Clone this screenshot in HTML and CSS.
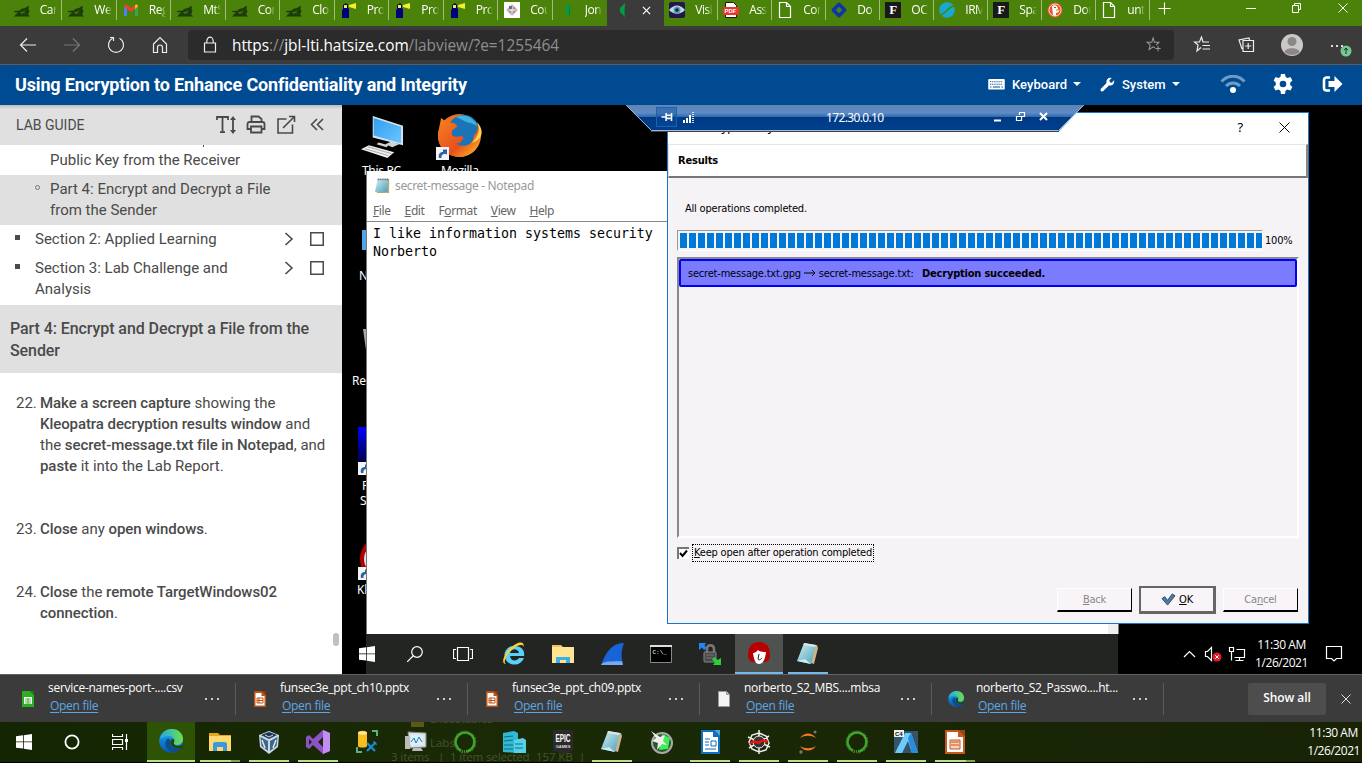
FILE: index.html
```html
<!DOCTYPE html>
<html lang="en">
<head>
<meta charset="utf-8">
<title>Lab view</title>
<link rel="stylesheet" href="styles.css">
</head>
<body>
<svg class="defs" aria-hidden="true">
  <defs>
    <linearGradient id="edgeBlue" x1="0" y1="0" x2="0" y2="1"><stop offset="0" stop-color="#35c1f1"/><stop offset=".5" stop-color="#0f7fd4"/><stop offset="1" stop-color="#0c59a4"/></linearGradient>
    <linearGradient id="edgeTop" x1="0" y1="0" x2="1" y2="0"><stop offset="0" stop-color="#24a8e8"/><stop offset="1" stop-color="#6be04e"/></linearGradient>
    <linearGradient id="screen" x1="0" y1="0" x2="1" y2="1"><stop offset="0" stop-color="#2f9df0"/><stop offset="1" stop-color="#6cc6ff"/></linearGradient>
    <linearGradient id="fox" x1="0" y1="0" x2="1" y2="1"><stop offset="0" stop-color="#f58220"/><stop offset=".6" stop-color="#e8501c"/><stop offset="1" stop-color="#ffc928"/></linearGradient>
    <linearGradient id="noteFill" x1="0" y1="0" x2="1" y2="1"><stop offset="0" stop-color="#d5f0f6"/><stop offset="1" stop-color="#4d9fb6"/></linearGradient>
    <linearGradient id="puttyBlue" x1="0" y1="0" x2="0" y2="1"><stop offset="0" stop-color="#0000ff"/><stop offset="1" stop-color="#000048"/></linearGradient>
    <linearGradient id="rdpFill" x1="0" y1="0" x2="0" y2="1"><stop offset="0" stop-color="#5f83b4"/><stop offset=".3" stop-color="#5d8cc5"/><stop offset=".46" stop-color="#2f68ae"/><stop offset=".47" stop-color="#003a84"/><stop offset="1" stop-color="#003f8e"/></linearGradient>
  </defs>
  <symbol id="wolf" viewBox="0 0 16 16"><path d="M0 9l6-.5 1-1.500 4-1 3-2 1 .5-.5 2.500 1 2-1.500 4h1l.5 1H1v-1l3-2.500-4-.5zM6 10.500l2 1.500 3-3z" fill="#1c3d0a" fill-rule="evenodd"/><path d="M0 14.500h16M11 8l-1 4" stroke="#335c0b" fill="none"/></symbol>
  <symbol id="gmail" viewBox="0 0 16 16"><path d="M1 14V3.500l3 2V14z" fill="#4285f4"/><path d="M15 14V3.500l-3 2V14z" fill="#34a853"/><path d="M1 4.500C1 2.500 2.500 2 4 3l4 3 4-3v4L8 10 1 5z" fill="#ea4335"/><path d="M12 3c2-1.300 3 0 3 1.500L12 7z" fill="#fbbc04"/></symbol>
  <symbol id="house" viewBox="0 0 16 16"><path d="M2 3l3-2 2 2v3l1 1v9H1V8l1-1V4H2z" fill="#00007c"/><path d="M3 3h3v3H3zM8 3l7-2v6l-7-2z" fill="#f4ee2c"/></symbol>
  <symbol id="course" viewBox="0 0 16 16"><rect width="16" height="16" fill="#fff"/><path d="M8 2l6 6-6 6-6-6z" fill="#c2c4d0"/><circle cx="8" cy="8" r="3.500" fill="#b88d92"/><path d="M5 8h6M8 5v6" stroke="#fff"/><path d="M5 4h3v3H5z" fill="#5b7580"/></symbol>
  <symbol id="bluePip" viewBox="0 0 16 16"><path d="M11 1v14l-5-5V6z" fill="#009c46"/><path d="M11 1v14l-1-4z" fill="#007b34"/></symbol>
  <symbol id="eye" viewBox="0 0 16 16"><rect width="16" height="16" rx="2" fill="#26144b"/><path d="M0 8c5-6 11-6 16 0-5 5-11 5-16 0z" fill="#b9ddea"/><circle cx="8" cy="8" r="3.500" fill="#5b9bb4"/><circle cx="8" cy="8" r="1.700" fill="#122"/></symbol>
  <symbol id="page" viewBox="0 0 16 16"><path d="M2.500.5h7l4 4v11h-11zM9.500.5v4h4" fill="none" stroke="#fff" stroke-width="1.200"/></symbol>
  <symbol id="diamond" viewBox="0 0 16 16"><path d="M8 2.300L13.700 8 8 13.700 2.300 8z" fill="none" stroke="#0b34ad" stroke-width="3.400" stroke-linejoin="round"/></symbol>
  <symbol id="leaf" viewBox="0 0 16 16"><circle cx="8" cy="8" r="7.800" fill="#18a9cf"/><path d="M2 13C7 11 9 5 15 4" stroke="#4b830c" stroke-width="1.500" fill="none"/></symbol>
  <symbol id="duck" viewBox="0 0 16 16"><circle cx="8" cy="8" r="7.500" fill="#e85430"/><circle cx="8" cy="8" r="6" fill="none" stroke="#fff" stroke-width=".8"/><path d="M5 4c4-2 6 1 6 3l1 3-3 1v3l-3-1z" fill="#fff"/><path d="M9 7l4 1-4 1.500z" fill="#f8c221"/><circle cx="8" cy="5.500" r=".8" fill="#234"/></symbol>
  <symbol id="shortcut" viewBox="0 0 13 13"><rect width="13" height="13" fill="#f4f4f4"/><path d="M3 11c-1-4 1-6 4-6V2.500h4v5L9 6.800C6 7 5 9 5.500 11z" fill="#2a62a5"/></symbol>
  <symbol id="win" viewBox="0 0 16 16"><path d="M0 2.200l7-.9v6.200H0zM7.800 1.200L16 0v7.500H7.800zM0 8.300h7v6.300l-7-.9zM7.800 8.300H16V16l-8.200-1.300z" fill="#fff"/></symbol>
  <symbol id="notepad" viewBox="0 0 24 24"><path d="M9 3h12l1 3-4 16-3-1z" fill="#cdb489"/><path d="M8 1l12 2-5 19L1 19z" fill="url(#noteFill)"/><path d="M8 1l12 2-1 2L7.500 3z" fill="#dce7e9"/><path d="M1 19l8-2 6 5z" fill="#c6edf4"/></symbol>
  <symbol id="folder" viewBox="0 0 24 24"><path d="M1 3h9l2 2h11v3H1z" fill="#e7a51c"/><path d="M1 6h22v15H1z" fill="#ffd970"/><path d="M5 21v-7c0-1 1-2 2-2h10c1 0 2 1 2 2v7h-4v-4H9v4z" fill="#3a99dd"/></symbol>
  <symbol id="edge" viewBox="0 0 24 24"><circle cx="12" cy="12" r="11.800" fill="url(#edgeBlue)"/><path d="M1 10C3 3 8 0 13 0c7 0 11 5 11 10 0 4-3 6-6 6-3 0-4-1-3-3 1-4-3-7-7-6-3 .5-5 1.500-7 3z" fill="url(#edgeTop)"/><path d="M8 10c-4 5 0 14 8 13 4-1 6-3 7-5-6 3-13 0-12-6 0-2-1-3-3-2z" fill="#0d4e91"/><path d="M15 10c1 3-1 4 0 5 1 2 5 3 8 1 .6-.6 1-1.500 1.500-2.500V20l-2-1c-3 1-9 0-11-4-1-2 0-5 3-5z" class="edge-gap"/></symbol>
  <symbol id="calc" viewBox="0 0 12 16"><path d="M0 0h8l4 4v12H0z" fill="#2cae22"/><path d="M2 6h8v7H2z" fill="#fff"/><path d="M3 8h6M3 10h6M3 12h6M6 7v6" stroke="#2cae22" stroke-width=".8"/><path d="M8 0h4v4z" fill="#1d7b17"/></symbol>
  <symbol id="impressSmall" viewBox="0 0 12 16"><path d="M0 0h8l4 4v12H0z" fill="#bd5217"/><path d="M1.500 2h6v3h3v9.500h-9z" fill="#fff"/><path d="M3 7h6v5H3zM3 9.500h6M5 7v5" stroke="#bd5217" fill="none"/><path d="M8.500 0H12v3.500z" fill="#8c3a0d"/></symbol>
  <symbol id="blank" viewBox="0 0 12 16"><path d="M.5.5h8l3 3v12H.5z" fill="#f4f4f4" stroke="#999"/><path d="M8.500.5v3h3" fill="#bbb" stroke="#999"/></symbol>
  <symbol id="conda" viewBox="0 0 24 24"><circle cx="12" cy="12" r="9.500" fill="none" stroke="#42a72d" stroke-width="2.600" stroke-dasharray="32 1 1 1 1 1" transform="rotate(-110 12 12)"/><circle cx="12" cy="12" r="10.800" fill="none" stroke="#347b26" stroke-width="1.500" stroke-dasharray="1 2 2 1.500 0 0" pathLength="80"/></symbol>
</svg>

<div class="desktop">
  <header class="tabs">
    <div class="tab"><svg><use href="#wolf"/></svg><span>Can</span></div>
    <div class="tab"><svg><use href="#wolf"/></svg><span>Wel</span></div>
    <div class="tab"><svg><use href="#gmail"/></svg><span>Reg</span></div>
    <div class="tab"><svg><use href="#wolf"/></svg><span>MtS</span></div>
    <div class="tab"><svg><use href="#wolf"/></svg><span>Con</span></div>
    <div class="tab"><svg><use href="#wolf"/></svg><span>Clo</span></div>
    <div class="tab"><svg><use href="#house"/></svg><span>Pro</span></div>
    <div class="tab"><svg><use href="#house"/></svg><span>Pro</span></div>
    <div class="tab"><svg><use href="#house"/></svg><span>Pro</span></div>
    <div class="tab"><svg><use href="#course"/></svg><span>Cou</span></div>
    <div class="tab last"><svg><use href="#bluePip"/></svg><span>Jon</span></div>
    <div class="tab active"><svg><use href="#bluePip"/></svg><svg class="tab-x" viewBox="0 0 10 10"><path d="M1 1l8 8M9 1L1 9" stroke="#fff" stroke-width="1.300"/></svg></div>
    <div class="tab r"><svg><use href="#eye"/></svg><span>Visi</span></div>
    <div class="tab r"><svg viewBox="0 0 16 16"><path d="M2.500.5h8l3 3v12h-11z" fill="#fff" stroke="#17200d"/><rect y="5" width="16" height="8" rx="1" fill="#ee342f"/><text x="1.500" y="11.300" class="pdf-word">PDF</text></svg><span>Ass</span></div>
    <div class="tab r"><svg><use href="#page"/></svg><span>Con</span></div>
    <div class="tab r"><svg><use href="#diamond"/></svg><span>Do</span></div>
    <div class="tab r"><b class="eff">F</b><span>OC</span></div>
    <div class="tab r"><svg><use href="#leaf"/></svg><span>IRM</span></div>
    <div class="tab r"><b class="eff">F</b><span>Spa</span></div>
    <div class="tab r"><svg><use href="#duck"/></svg><span>Dor</span></div>
    <div class="tab r"><svg><use href="#page"/></svg><span>unti</span></div>
    <svg class="new-tab" viewBox="0 0 14 14"><path d="M7 .5v13M.5 7h13" stroke="#fff" stroke-width="1.200"/></svg>
    <svg class="win-ctl" viewBox="0 0 106 12"><path d="M1 6.500h10M47.500 3.500h6v7h-6zM49.500 3.500v-2h6v6h-2M93.500 1.500l9 9M102.500 1.500l-9 9" fill="none" stroke="#fff"/></svg>
  </header>

  <div class="toolbar">
    <div class="nav-icons">
      <svg viewBox="0 0 18 18"><path d="M17 9H2M8 2.500L1.500 9 8 15.500" class="ln"/></svg>
      <svg viewBox="0 0 18 18" class="dim"><path d="M1 9h15M10 2.500L16.500 9 10 15.500" class="ln"/></svg>
      <svg viewBox="0 0 18 18"><path d="M12.500 2.200a7.500 7.500 0 1 1-7 0M3 1.500h3.500V5" class="ln"/></svg>
      <svg viewBox="0 0 18 18"><path d="M2.500 8L9 1.500 15.500 8v8.500h-4v-5a2.500 2.500 0 0 0-5 0v5h-4z" class="ln"/></svg>
    </div>
    <div class="address">
      <svg class="lock" viewBox="0 0 14 18"><path d="M1.500 7h11v9h-11zM3.800 7V5a3.200 3.800 0 0 1 6.400 0v2" class="ln"/></svg>
      <span class="url"><i>https</i>://<i>jbl-lti.hatsize.com</i>/labview/?e=1255464</span>
      <svg class="fav" viewBox="0 0 18 18"><path d="M10 12l-2-1-4.500 3 1.200-5.200L1.500 6h5L8 1l1.500 5h5l-3 3M13.500 10v6M10.500 13h6" class="ln"/></svg>
    </div>
    <div class="tools">
      <svg viewBox="0 0 18 18"><path d="M8 11.500L4 15l1-6-3.500-3h5L8.500 1l1.500 5h6M9.500 9.500H17M9.500 13H17" class="ln"/></svg>
      <svg viewBox="0 0 18 18"><path d="M6 4.500h10.500v11H6zM11.200 7v6M8.200 10h6M5 13L2 4l10-2 .5 2" class="ln"/></svg>
      <svg class="avatar" viewBox="0 0 22 22"><circle cx="11" cy="11" r="11" fill="#cbc9c7"/><circle cx="11" cy="7.500" r="4.500" fill="#8b8887"/><path d="M3.500 18c1-5 14-5 15 0-3 4-12 4-15 0z" fill="#8b8887"/></svg>
      <svg class="more" viewBox="0 0 24 18"><path d="M2 6h2v2H2zM7 6h2v2H7zM12 6h2v2h-2z" fill="#ddd"/><circle cx="17" cy="12" r="5.500" fill="#79c893"/><path d="M17 15V9.500M15 11.200L17 9l2 2.200" stroke="#153a20" fill="none"/></svg>
    </div>
  </div>

  <div class="lab-bar">
    <h1>Using Encryption to Enhance Confidentiality and Integrity</h1>
    <div class="lab-menu">
      <svg class="kbd" viewBox="0 0 18 12"><rect width="18" height="11.500" rx="1" fill="#fff"/><path d="M2 3h14M2 5.700h14" stroke="#004a92" stroke-width="1.200" stroke-dasharray="1.300 1"/><path d="M2 8.800h1.500M5 8.800h8M14.500 8.800H16" stroke="#004a92" stroke-width="1.200"/></svg>
      <span class="m1">Keyboard</span><b class="caret"></b>
      <svg class="wrench" viewBox="0 0 16 16"><path d="M1 12.500l6-6C6 3 9-.2 12.500 1L10 3.500l.5 2 2 .5L15 3.500C16 7 13 10 9.500 9l-6 6C2 16.500-.5 14 1 12.500z" fill="#fff"/></svg>
      <span class="m2">System</span><b class="caret"></b>
      <svg class="wifi" viewBox="0 0 26 18"><path d="M1.500 6.500C8-.5 18-.5 24.500 6.500M6 11c4-4 10-4 14 0" stroke="#6f9cc6" stroke-width="3" fill="none"/><circle cx="13" cy="15" r="3" fill="#fff"/></svg>
      <svg class="gear" viewBox="0 0 20 20"><path d="M8 0h4l.6 3 2 1.100 2.800-1 2 3.500-2.200 2v2.500l2.200 2-2 3.500-2.900-1-2 1.200L12 20H8l-.6-3.200-2-1.200-2.800 1-2-3.500 2.200-2V8.600L.6 6.600l2-3.500 2.800 1 2-1.100z" fill="#fff"/><circle cx="10" cy="10" r="3.300" fill="#004a92"/></svg>
      <svg class="exit" viewBox="0 0 20 16"><path d="M7.500 1.500H4A2.500 2.500 0 0 0 1.500 4v8A2.500 2.500 0 0 0 4 14.500h3.500" stroke="#fff" stroke-width="2.600" fill="none"/><path d="M6 5h6V0l8 8-8 8v-5H6z" fill="#fff"/></svg>
    </div>
  </div>

  <main class="stage">
    <aside class="guide">
      <div class="guide-head">
        <span>LAB GUIDE</span>
        <svg viewBox="0 0 110 20"><g stroke="#4a4a4a" fill="none" stroke-width="1.800"><path d="M1 5V2h11v3M6.500 2v15M4 17.200h5M17 3v14"/><path d="M14 5l3-4 3 4zM14 15l3 4 3-4z" fill="#4a4a4a" stroke="none"/><path d="M35.500 7V1.500h7l3 2.500v3M35 14h-3.500V9c0-1.200.6-2 2-2h13c1.500 0 2 1 2 2v5H45M35 11.500h10.500v6H35z"/><path d="M70.500 4H62v14h14.500V9.500M67 13L78 2M73 1.500h5.500V7" stroke-width="1.600"/><path d="M101 4l-5.500 5.500L101 15M107 4l-5.500 5.500L107 15" stroke-width="1.600"/></g></svg>
      </div>
      <div class="toc">
        <div class="toc-sub first"><em></em><p>Public Key from the Receiver</p></div>
        <div class="toc-sub current"><i></i><p>Part 4: Encrypt and Decrypt a File from the Sender</p></div>
        <div class="toc-sec"><i></i><p>Section 2: Applied Learning</p><svg viewBox="0 0 10 14"><path d="M1.500 1l6.500 6-6.500 6" class="dk"/></svg><b></b></div>
        <div class="toc-sec"><i></i><p>Section 3: Lab Challenge and Analysis</p><svg viewBox="0 0 10 14"><path d="M1.500 1l6.500 6-6.500 6" class="dk"/></svg><b></b></div>
      </div>
      <h2>Part 4: Encrypt and Decrypt a File from the Sender</h2>
      <ol class="steps">
        <li><span>22.</span><p><b>Make a screen capture</b> showing the<br><b>Kleopatra decryption results window</b> and<br>the <b>secret-message.txt file in Notepad</b>, and<br><b>paste</b> it into the Lab Report.</p></li>
        <li><span>23.</span><p><b>Close</b> any <b>open windows</b>.</p></li>
        <li><span>24.</span><p><b>Close</b> the <b>remote TargetWindows02<br>connection</b>.</p></li>
      </ol>
      <div class="scroll-thumb"></div>
    </aside>

    <section class="remote">
      <svg class="ico pc" viewBox="0 0 44 44"><path d="M12 0l31 10v20L12 22z" fill="#d6e2ea"/><path d="M13 2l28 9v17L13 20z" fill="url(#screen)"/><path d="M25 29l6-3 8 3-7 3zM18 27l10 3-2 2-10-3z" fill="#cfd6da"/><path d="M0 34l8-4 26 7-7 6z" fill="#eee"/><path d="M4 33.500l24 7M7 31.500l24 7" stroke="#aaa" fill="none"/></svg>
      <svg class="ico ff" viewBox="0 0 44 44"><circle cx="22" cy="22" r="21" fill="url(#fox)"/><circle cx="26" cy="17" r="15" fill="#1b73b8"/><path d="M18 4c8-4 18 0 22 9l-6-3c-5 0-10-4-16-6z" fill="#3bb4df"/><path d="M39 10c9 13 0 32-16 33C9 43 0 33 1 20L4 5l7 5c4-1 7 0 9 3l-5 4c-2 5 1 7 6 6 3-1 7 0 4 3-2 5-8 4-9 4 10 6 20 1 20-8 3-3 5-7 3-12z" fill="url(#fox)"/><path d="M39 9c4 7 1 15-5 20 13-3 11-15 5-20z" fill="#ffd34a"/></svg>
      <svg class="ico sc1"><use href="#shortcut"/></svg>
      <span class="dlabel l-pc">This PC</span><span class="dlabel l-moz">Mozilla</span>
      <span class="net-icon"></span><span class="dlabel l-net">Network</span>
      <svg class="ico bin" viewBox="0 0 20 28"><path d="M0 0h20l-3 28H4z" fill="#a5a5a5"/></svg><span class="dlabel l-bin">Recycle Bin</span>
      <svg class="ico putty" viewBox="0 0 40 35"><path d="M0 0h40v35H0z" fill="url(#puttyBlue)"/></svg><svg class="ico sc2"><use href="#shortcut"/></svg>
      <span class="dlabel l-p">Putty</span><span class="dlabel l-s">Server</span>
      <svg class="ico kleo-big" viewBox="0 0 40 44"><ellipse cx="20" cy="22" rx="20" ry="22" fill="#b30000"/><ellipse cx="20" cy="22" rx="16" ry="16" fill="#ddd"/></svg><svg class="ico sc3"><use href="#shortcut"/></svg>
      <span class="dlabel l-k">Kleopatra</span>

      <div class="notepad">
        <div class="np-title"><svg viewBox="0 0 18 18"><path d="M4 2h12v15H3z" fill="#bda474"/><path d="M4 2h11l-1 14H1z" fill="url(#noteFill)"/><path d="M4 2.500h12" stroke="#556" stroke-width="2" stroke-dasharray="1 1"/></svg><span>secret-message - Notepad</span></div>
        <div class="np-menu"><span><u>F</u>ile</span><span><u>E</u>dit</span><span>F<u>o</u>rmat</span><span><u>V</u>iew</span><span><u>H</u>elp</span></div>
        <pre>I like information systems security
Norberto</pre>
        <i class="np-corner"></i>
      </div>

      <div class="dialog">
        <div class="dlg-title"><span class="dlg-name">Decrypt/Verify Files</span><span class="q">?</span><svg viewBox="0 0 11 11"><path d="M.5.5l10 10M10.500.5l-10 10" stroke="#000"/></svg></div>
        <div class="dlg-head">Results</div>
        <div class="dlg-body">
          <p>All operations completed.</p>
          <div class="progress"><div class="track"><i></i></div><span>100%</span></div>
          <div class="results"><div class="result"><span class="names">secret-message.txt.gpg <svg viewBox="0 0 12 8"><path d="M0 4h11M8 1l3 3-3 3" stroke="#000" fill="none"/></svg> secret-message.txt:</span><b>Decryption succeeded.</b></div></div>
          <div class="keep"><i><svg viewBox="0 0 9 9"><path d="M1 4l2.500 3L8 1.500" stroke="#000" stroke-width="2" fill="none"/></svg></i><span><u>K</u>eep open after operation completed</span></div>
          <div class="buttons"><button class="off"><span class="bk"><u>B</u>ack</span></button><button class="ok"><svg viewBox="0 0 16 14"><path d="M1 6l3-2 3 4 5-7 3 2-8 10z" fill="#4d7ba6" stroke="#284766"/></svg><span><u>O</u>K</span></button><button class="off"><span class="cn">Ca<u>n</u>cel</span></button></div>
        </div>
      </div>

      <div class="rdp">
        <svg class="rdp-shape" viewBox="0 0 458 27"><path d="M0 0h458l-25 26H25z" fill="url(#rdpFill)"/><path d="M0 0l25.500 25.500h407L458 0" fill="none" stroke="#9db6d3"/><path d="M25 26.500h408" stroke="#444"/></svg>
        <div class="rdp-row">
          <i class="pin"><svg viewBox="0 0 12 11"><path d="M0 5.500h5M5 1v9M5 3.500h5M5 7h5M11 1v9" stroke="#fff" stroke-width="1.700"/></svg></i>
          <svg class="sig" viewBox="0 0 12 12"><path d="M1 9v3M4 7v5M7 4v8" stroke="#fff" stroke-width="2"/><path d="M10 1v11" stroke="#cfe0f2" stroke-width="2" stroke-dasharray="1 1"/></svg>
          <span>172.30.0.10</span>
          <svg class="rdp-ctl" viewBox="0 0 54 12"><path d="M0 9.500h7" stroke="#fff" stroke-width="2"/><path d="M22.500 5.500h5v4h-5zM25.500 4V1.500h5v4H28" stroke="#fff" stroke-width="1.200" fill="none"/><path d="M46 2l7 7M53 2l-7 7" stroke="#fff" stroke-width="2"/></svg>
        </div>
      </div>

      <div class="rtask">
        <div class="rcell"><svg class="s16"><use href="#win"/></svg></div>
        <div class="rcell"><svg class="s16" viewBox="0 0 16 16"><circle cx="10" cy="6" r="5.300" class="ln"/><path d="M6 10L0 16" class="ln"/></svg></div>
        <div class="rcell tv"><svg class="s20" viewBox="0 0 20 16"><path d="M4.500 1.500h11v13h-11zM3 3.500H.5v9H3M17 3.500h2.500v9H17" class="ln"/></svg></div>
        <div class="rcell"><svg class="s24" viewBox="0 0 24 24"><path d="M22 14H8c1 6 7 5 9 2h5c-3 7-10 8-15 5C-1 16 2 3 13 4c7 0 10 5 9 10zM8 11h9c-1-5-8-5-9 0z" fill="#5bd0f8" fill-rule="evenodd"/><path d="M4 22C-3 22 4 7 14 2c6-3 9-1 7 4 1-3-1-4-6-2C6 9 0 20 4 22z" fill="#ffd22e"/></svg></div>
        <div class="rcell"><svg class="s24" viewBox="0 0 24 24"><path d="M1 3h9l2 2h11v3H1z" fill="#f1c257"/><path d="M1 5h22v16H1z" fill="#ffe592"/><path d="M5 21v-6h14v6h-4v-3H9v3z" fill="#3ab0e8"/></svg></div>
        <div class="rcell"><svg class="s24" viewBox="0 0 24 24"><path d="M1 23C7 7 14 1 24 1c-3 8-3 14-1 22z" fill="#1764d8"/><path d="M1 23c2-5 15-3 21-4l1 4z" fill="#7aa7ee"/></svg></div>
        <div class="rcell"><svg class="s24" viewBox="0 0 24 24"><path d="M1.500 3.500h21v17h-21z" fill="#000" stroke="#888"/><path d="M1 4h22" stroke="#ddd" stroke-width="2"/><text x="3.500" y="12" class="cmd-word">C:\_</text></svg></div>
        <div class="rcell"><svg class="s24" viewBox="0 0 24 24"><path d="M9 11V7c0-5 7-5 7 0v4" fill="none" stroke="#777" stroke-width="2.500"/><rect x="6" y="10" width="12" height="10" rx="1" fill="#4a4a4a" stroke="#888"/><path d="M8 13h8M8 16h8" stroke="#777"/><path d="M1 1h7L6.500 3.500 9 6 6 8 4 5.500 1 8z" fill="#2684f0"/><path d="M23 23h-8l2-2.500-3-3 2.500-2.500 3 3L23 16z" fill="#28d335"/></svg></div>
        <div class="rcell on"><svg class="s24" viewBox="0 0 24 24"><path d="M12 1C4 1 1 7 1 14c0 4 2 7 5 7h12c3 0 5-3 5-7C23 7 20 1 12 1z" fill="#b80000"/><path d="M6 12c2 0 4-2 5-3 2 2 5 2 8 2-1 8-3 12-7 12-3 0-5-3-6-11z" fill="#fff"/><path d="M12 13l-1 5c1 2 3 0 4-1" fill="none" stroke="#222"/></svg></div>
        <div class="rcell open"><svg class="s24"><use href="#notepad"/></svg></div>
        <div class="rtray">
          <svg viewBox="0 0 64 18"><path d="M2 12l5.500-5.500L13 12M23.500 6.500h2l4-4v13l-4-4h-2zM54.500 4.500h8v8H52.500M57.500 12.500v3M53.500 15.500h8M47.500 2.500h4v4h-4zM49.500 6.500v9" class="ln"/><circle cx="35" cy="12" r="4.500" fill="#e21b2d"/><path d="M33.300 10.300l3.400 3.400M36.700 10.300l-3.400 3.400" stroke="#fff"/></svg>
          <div class="clock"><span>11:30 AM</span><span>1/26/2021</span></div>
          <svg class="note" viewBox="0 0 18 18"><path d="M1.500 1.500h15v12h-5L9 16l-2.500-2.500h-5z" class="ln"/></svg>
        </div>
      </div>
    </section>
  </main>

  <div class="downloads">
    <div class="dl"><svg><use href="#calc"/></svg><div><span>service-names-port-....csv</span><a>Open file</a></div><b></b></div>
    <div class="dl"><svg><use href="#impressSmall"/></svg><div><span>funsec3e_ppt_ch10.pptx</span><a>Open file</a></div><b></b></div>
    <div class="dl"><svg><use href="#impressSmall"/></svg><div><span>funsec3e_ppt_ch09.pptx</span><a>Open file</a></div><b></b></div>
    <div class="dl"><svg><use href="#blank"/></svg><div><span>norberto_S2_MBS....mbsa</span><a>Open file</a></div><b></b></div>
    <div class="dl"><svg class="wide"><use href="#edge"/></svg><div><span>norberto_S2_Passwo....ht...</span><a>Open file</a></div><b></b></div>
    <button class="show-all">Show all</button>
    <svg class="close" viewBox="0 0 10 10"><path d="M.5.5l9 9M9.500.5l-9 9" stroke="#ddd"/></svg>
  </div>

  <footer class="taskbar">
    <div class="ghost"><i></i><span class="g1">Executables</span><span class="g2">Labs</span><span class="g3">3 items</span><span class="g4">|</span><span class="g5">1 item selected</span><span class="g6">157 KB</span><span class="g7">|</span></div>
    <div class="cell"><svg class="s16"><use href="#win"/></svg></div>
    <div class="cell"><svg class="s16" viewBox="0 0 16 16"><circle cx="8" cy="8" r="6.600" fill="none" stroke="#fff" stroke-width="1.800"/></svg></div>
    <div class="cell"><svg class="s16" viewBox="0 0 16 16"><path d="M.5 0v2.500h10V0M.5 5.500h10v5H.5zM.5 16v-2.500h10V16M14.500 0v16" class="ln"/><path d="M13 5h3v3h-3z" fill="#fff"/></svg></div>
    <div class="cell focus gap"><svg class="s24"><use href="#edge"/></svg></div>
    <div class="cell run multi"><svg class="s24"><use href="#folder"/></svg></div>
    <div class="cell run"><svg class="s24" viewBox="0 0 24 24"><path d="M12 1l10 4-1 12-9 7-9-7L2 5z" fill="#c9d9e6"/><path d="M12 2l8 3-8 4-8-4z" fill="#193859"/><path d="M3.500 7l7.500 4v10l-6.500-5zM20.500 7L13 11v10l6.500-5z" fill="#3f6688"/><path d="M8 5l4 2 4-2" stroke="#ddd" fill="none"/><path d="M5 10l3 8M19 10l-3 8" stroke="#dce8f0" stroke-width="1.500"/></svg></div>
    <div class="cell run"><svg class="s24" viewBox="0 0 24 24"><path d="M17 0l7 3v18l-7 3L7 15l-4 4-3-2V7l3-2 4 4zM17 7l-5 5 5 5zM3 9v6l3-3z" fill="#8d52c5" fill-rule="evenodd"/><path d="M17 0l7 3v18l-7 3z" fill="#c08df0"/></svg></div>
    <div class="cell"><svg class="s24" viewBox="0 0 24 24"><path d="M3 3c0-3 9-3 9 0v13c0 2-9 2-9 0z" fill="#f5bf20"/><ellipse cx="7.500" cy="3" rx="4.500" ry="1.800" fill="#ffe58a"/><path d="M17 1h5v5M2 17v5h5" stroke="#5bb46f" stroke-width="2" fill="none"/><path d="M12 21l8-8M12 13l8 8" stroke="#168cd3" stroke-width="2.200"/><path d="M18 11l3 1 1 3-3-1z" fill="#168cd3"/></svg></div>
    <div class="cell"><svg class="s24" viewBox="0 0 24 24"><path d="M4 2l18 1v14l-16 1z" fill="#dfe3e5" stroke="#888"/><path d="M7 5l12 .5v9l-12 .5z" fill="#d8f2ff"/><path d="M7 12l3-4 2 5 3-6 3 5" stroke="#2777aa" fill="none"/><path d="M1 6h5v13H1zM9 18h8l2 3H8z" fill="#bbb"/></svg></div>
    <div class="cell"><svg class="s24"><use href="#conda"/></svg></div>
    <div class="cell"><svg class="s24" viewBox="0 0 24 24"><path d="M1 3l11-2 4 2v20L1 22z" fill="#31b8d2"/><path d="M12 10l9-2 3 2v13H12z" fill="#56d2e7"/><path d="M2 7l9-1M2 11l9-1M2 15h9M2 19h9M13 14h8M13 18h8" stroke="#126c86"/></svg></div>
    <div class="cell"><svg class="s24" viewBox="0 0 24 24"><path d="M2 0h20v21l-10 3-10-3z" fill="#2a2a2a"/><text x="12" y="12" class="epic-word" textLength="15" lengthAdjust="spacingAndGlyphs">EPIC</text><text x="12" y="17.500" class="games-word">GAMES</text></svg></div>
    <div class="cell run"><svg class="s24"><use href="#notepad"/></svg></div>
    <div class="cell"><svg class="s24" viewBox="0 0 24 24"><circle cx="13" cy="13" r="10" fill="#28582d" stroke="#aaa" stroke-width="2"/><path d="M13 4l8 4-2 11-9 1z" fill="#41ed55"/><path d="M2 1l9 6 5-2-2 6 4 4-5-1-5 6 1-7-6-2 4-3z" fill="#eee"/></svg></div>
    <div class="cell run"><svg class="s24" viewBox="0 0 24 24"><path d="M3 0h13l6 6v18H3z" fill="#0d71bd"/><path d="M5 2h10v5h5v15H5z" fill="#fff"/><path d="M7 9h5M7 12h4M7 15h4M7 19h11M13 11h5v5h-5z" stroke="#0d71bd" fill="none"/><path d="M16 0h6v6z" fill="#4aa7df"/></svg></div>
    <div class="cell run"><svg class="s24" viewBox="0 0 24 24"><path d="M12 3l7 3 3 7-3 7-7 2-7-3-3-7 3-7zM12 0v24M1 7l22 10M22 6L2 18" fill="none" stroke="#eee" stroke-width="1.500"/><circle cx="12" cy="12" r="6" fill="#333" stroke="#eee"/><path d="M3 14c5-6 7 1 10-2 4-4 5 1 8-1" stroke="#e11" stroke-width="2.500" fill="none"/></svg></div>
    <div class="cell run"><svg class="s24" viewBox="0 0 24 24"><path d="M4 8c4-6 12-6 16 0-5-3-11-3-16 0zM4 16c4 6 12 6 16 0-5 3-11 3-16 0z" fill="#f37726"/><circle cx="19" cy="2" r="1.500" fill="#777"/><circle cx="5" cy="22" r="1.700" fill="#777"/></svg></div>
    <div class="cell run"><svg class="s24"><use href="#conda"/></svg></div>
    <div class="cell run"><svg class="s24" viewBox="0 0 24 24"><path d="M4 1h20v22H0V8z" fill="#34546c"/><path d="M11 3h6l7 20h-6l-4-12-6 12H1z" fill="#6ecafb"/><path d="M14 8l4 15h6L17 3z" fill="#258ddb"/><path d="M0 0h10v7H0z" fill="#eee"/><text x="1" y="6" class="c4-word">C4</text></svg></div>
    <div class="cell run multi"><svg class="s24" viewBox="0 0 24 24"><path d="M2 0h14l6 6v18H2z" fill="#c65919"/><path d="M4 2h11v5h5v15H4z" fill="#fff"/><path d="M7 10h10v9H7z" fill="#f6d2c0" stroke="#c65919"/><path d="M8 12h8M8 15h8" stroke="#c65919"/><path d="M16 0h6v6z" fill="#a0420d"/></svg></div>
    <div class="clock out"><span>11:30 AM</span><span>1/26/2021</span></div>
  </footer>
</div>
</body>
</html>
```
FILE: styles.css
```css
* { box-sizing: border-box; }
body { margin: 0; background: #000; font-family: "Open Sans", "Noto Sans", sans-serif; }
p, h1, h2, ol, pre { margin: 0; padding: 0; }
svg { display: block; flex: none; }
.defs { position: absolute; width: 0; height: 0; }
.ln { fill: none; stroke: currentColor; stroke-width: 1.2; }
.dk { fill: none; stroke: #4a4a4a; stroke-width: 1.6; }
.s16 { width: 16px; height: 16px; }
.s20 { width: 20px; height: 16px; }
.s24 { width: 24px; height: 24px; }
.edge-gap { fill: #27440a; }
.pdf-word { font: bold 6px "Liberation Sans", sans-serif; fill: #fff; }
.cmd-word { font: 6px "Liberation Mono", monospace; fill: #fff; }
.epic-word { font: bold 11px "Liberation Sans", sans-serif; fill: #fff; text-anchor: middle; }
.games-word { font: bold 4px "Liberation Sans", sans-serif; fill: #ddd; text-anchor: middle; }
.c4-word { font: bold 6px "Liberation Sans", sans-serif; fill: #111; }

.desktop { width: 1362px; height: 763px; display: flex; flex-direction: column; overflow: hidden; }

/* browser tabs */
.tabs { height: 26px; display: flex; background: #4b830a; padding-left: 7.800px; flex: none; }
.tab { width: 54.500px; height: 20px; padding: 2px 4px 0 6px; display: flex; gap: 10px; border-right: 1px solid #a3bd7e; flex: none; overflow: hidden; }
.tab svg, .tab .eff { width: 16px; height: 16px; flex: none; }
.tab .eff { background: #191919; color: #fff; font: bold 13px/16px "Liberation Serif", serif; text-align: center; }
.tab span { width: 19px; overflow: hidden; white-space: nowrap; color: #fff; font-size: 12px; line-height: 16px; letter-spacing: -0.5px; -webkit-mask-image: linear-gradient(90deg, #000 65%, transparent); mask-image: linear-gradient(90deg, #000 65%, transparent); }
.tab.last { border-right-color: transparent; }
.tab.r { width: 54px; padding-left: 5.500px; }
.tab.active { width: 56.500px; height: 26px; background: #3b3b3b; border: 0; gap: 12px; padding-left: 7px; }
.tab .tab-x { width: 9px; height: 9px; margin-top: 4px; }
.new-tab { width: 13px; height: 13px; margin: 2px 0 0 8px; }
.win-ctl { width: 106px; height: 12px; margin: 2px 11px 0 auto; }

/* browser toolbar */
.toolbar { height: 39px; flex: none; background: #3b3b3b; border-bottom: 1px solid #5d5d5d; display: flex; align-items: center; color: #eee; }
.nav-icons { display: flex; gap: 26px; padding-left: 19px; }
.nav-icons svg { width: 18px; height: 18px; }
.nav-icons .dim { color: #777; }
.address { width: 986px; height: 30px; margin-left: 19px; border-radius: 4px; background: #2b2b2b; display: flex; align-items: center; padding: 0 12px 0 15px; flex: none; }
.lock { width: 14px; height: 18px; }
.url { margin-left: 15px; font-size: 15.400px; letter-spacing: -0.03px; color: #8e8e8e; white-space: nowrap; }
.url i { font-style: normal; color: #fff; }
.fav { width: 16px; height: 16px; margin-left: auto; color: #999; }
.tools { display: flex; align-items: center; margin-left: 19px; }
.tools svg { width: 18px; height: 18px; margin-right: 26px; }
.tools .avatar { width: 22px; height: 22px; margin-right: 26px; }
.tools .more { width: 24px; height: 18px; margin: 5px 0 0; }

/* lab header */
.lab-bar { height: 40px; flex: none; background: #004a92; color: #fff; font-family: Roboto, sans-serif; display: flex; align-items: center; padding: 0 0 2px 15px; }
.lab-bar h1 { font-size: 18px; font-weight: 700; letter-spacing: -0.16px; white-space: nowrap; }
.lab-menu { margin-left: auto; display: flex; align-items: center; width: 374px; font-size: 13px; font-weight: 500; }
.kbd { width: 17px; height: 11px; }
.m1 { width: 54px; margin-left: 7px; letter-spacing: 0.05px; }
.caret { border: 4px solid transparent; border-top-color: #fff; border-bottom: 0; margin-left: 7px; flex: none; }
.wrench { width: 15px; height: 15px; margin-left: 19px; }
.m2 { width: 43px; margin-left: 7px; }
.wifi { width: 26px; height: 18px; margin-left: 40px; }
.gear { width: 20px; height: 20px; margin-left: 27px; }
.exit { width: 21px; height: 16px; margin-left: 29px; }

.stage { height: 569px; flex: none; display: flex; }

/* lab guide */
.guide { width: 342px; background: #fff; font-family: Roboto, sans-serif; font-size: 15px; line-height: 21px; color: #4a4a4a; position: relative; overflow: hidden; flex: none; }
.guide-head { height: 40px; background: linear-gradient(#bbb, #e0e0e0 4px); display: flex; align-items: center; justify-content: space-between; padding: 0 16px; font-size: 14px; }
.guide-head svg { width: 110px; height: 20px; }
.toc-sub { position: relative; padding: 4px 50px; }
.toc-sub.first { height: 30px; padding-top: 5px; }
.toc-sub.first em { position: absolute; left: 203px; top: 0; width: 1px; height: 2px; background: #4a4a4a; }
.toc-sub.current { height: 50px; background: #e0e0e0; }
.toc-sub i { position: absolute; left: 35px; top: 10px; width: 5px; height: 5px; border: 1px solid #777; border-radius: 3px; }
.toc-sec { display: flex; padding: 4px 18px 4px 15px; align-items: flex-start; }
.toc-sec i { width: 5px; height: 5px; background: #4a4a4a; margin-top: 6px; }
.toc-sec p { width: 216px; margin-left: 15px; padding-right: 18px; }
.toc-sec svg { width: 10px; height: 14px; margin: 3px 0 0 33px; }
.toc-sec b { width: 14px; height: 14px; border: 1.500px solid #4a4a4a; margin: 3px 0 0 auto; box-shadow: inset 0 0 0 .5px #4a4a4a; }
.toc-sec + .toc-sec { height: 51px; }
.guide h2 { height: 68px; background: #e0e0e0; padding: 13px 10px; font-size: 16px; line-height: 22px; font-weight: 500; letter-spacing: -0.08px; }
.steps { padding: 20px 0 0 16px; list-style: none; }
.steps li { display: flex; margin-bottom: 42px; }
.steps span { width: 24px; }
.steps b { font-weight: 500; letter-spacing: -0.07px; }
.steps p { white-space: nowrap; }
.scroll-thumb { position: absolute; right: 3px; top: 528px; width: 6px; height: 13px; border-radius: 3px; background: #c0c0c0; }

/* remote desktop canvas */
.remote { flex: 1; position: relative; overflow: hidden; background: #000; font-family: "Noto Sans", sans-serif; }
.ico { position: absolute; }
.pc { left: 19px; top: 11px; width: 43px; height: 43px; }
.ff { left: 95px; top: 8px; width: 45px; height: 45px; }
.sc1, .sc2, .sc3 { width: 13px; height: 13px; }
.sc1 { left: 94px; top: 42px; }
.sc2 { left: 16px; top: 357px; }
.sc3 { left: 16px; top: 462px; }
.dlabel { position: absolute; color: #fff; font-size: 12px; line-height: 16px; letter-spacing: -0.3px; white-space: nowrap; }
.l-pc { left: 20px; top: 58px; } .l-moz { left: 99px; top: 58px; }
.l-net { left: 17px; top: 163px; } .l-bin { left: 10px; top: 268px; }
.l-p { left: 20px; top: 373px; } .l-s { left: 18px; top: 388px; } .l-k { left: 15px; top: 477px; }
.net-icon { position: absolute; left: 20px; top: 125px; width: 20px; height: 20px; background: #4aa5ea; }
.bin { left: 21px; top: 224px; width: 20px; height: 28px; }
.putty { left: 16px; top: 322px; width: 40px; height: 35px; }
.kleo-big { left: 18px; top: 432px; width: 40px; height: 44px; }

.notepad { position: absolute; left: 24px; top: 66px; width: 753px; height: 463px; background: #fff; border: 1px solid #777; border-width: 0 1px 0 1px; }
.np-title { height: 29px; display: flex; align-items: center; gap: 4px; padding-left: 7px; font-size: 12px; color: #999; letter-spacing: -0.35px; }
.np-title svg { width: 17px; height: 17px; }
.np-menu { height: 22px; display: flex; align-items: center; gap: 14px; padding-left: 6px; font-size: 12px; color: #666; letter-spacing: -0.4px; border-bottom: 1px solid #888; }
.np-menu u, .dialog u { text-underline-offset: 1px; text-decoration-thickness: 1px; }
.notepad pre { padding: 3px 6px; font-family: "DejaVu Sans Mono", monospace; font-size: 13.290px; line-height: 18px; color: #000; }
.np-corner { position: absolute; right: 0; bottom: 0; width: 10px; height: 10px; background: #f0f0f0; }

.dialog { position: absolute; left: 325px; top: 7px; width: 642px; height: 512px; border: 1px solid #1877c9; background: #f6f3f6; font-family: "DejaVu Sans Condensed", "DejaVu Sans", sans-serif; font-stretch: condensed; font-size: 11px; letter-spacing: -0.2px; color: #000; display: flex; flex-direction: column; }
.dlg-title { height: 31px; flex: none; background: #fff; display: flex; align-items: center; padding: 0 18px 3px 0; }
.dlg-name { margin-left: 28px; font: 12px/14px "Noto Sans", sans-serif; padding-bottom: 1px; }
.q { margin-left: auto; margin-right: 36px; font-size: 13px; font-family: "Noto Sans", sans-serif; }
.dlg-title svg { width: 11px; height: 11px; }
.dlg-head { height: 34px; flex: none; background: #fff; border: 1px solid #e5e5e5; border-right: 2px solid #888; border-bottom: 2px solid #777; display: flex; align-items: center; padding-left: 9px; font-weight: 700; }
.dlg-body { flex: 1; padding: 0 10px 9px 9px; display: flex; flex-direction: column; }
.dlg-body p { padding: 23px 8px 0; line-height: 16px; }
.progress { display: flex; height: 21px; margin-top: 13px; align-items: center; gap: 2px; }
.track { width: 586px; height: 21px; border: 1px solid #999; border-right-color: #fff; border-bottom-color: #fff; padding: 2px; flex: none; }
.track i { display: block; width: 582px; height: 15px; background: repeating-linear-gradient(90deg, #0078d7 0 7px, transparent 7px 9px); }
.results { height: 281px; margin-top: 6px; width: 622px; border: 2px solid #777; border-color: #888 #fff #fff #888; }
.result { height: 28px; border: 2px solid #0000f8; border-radius: 2px; background: #7b7bff; display: flex; align-items: center; padding-left: 7px; white-space: pre; }
.result svg { display: inline-block; width: 12px; height: 8px; }
.names { width: 234px; }
.keep { display: flex; align-items: center; height: 19px; margin-top: 5px; gap: 3px; }
.keep i { width: 12px; height: 12px; background: #fff; border: 2px solid #777; border-right: 0; border-bottom: 0; }
.keep i svg { width: 9px; height: 9px; }
.keep span { border: 1px dotted #000; padding: 0 1px; height: 18px; line-height: 16px; white-space: nowrap; }
.buttons { margin-top: auto; display: flex; justify-content: flex-end; align-items: center; gap: 7px; }
.buttons button { width: 75px; height: 24px; padding: 0; font: inherit; letter-spacing: inherit; background: #f8f4f8; border: 1px solid #fff; border-right: 1px solid #000; border-bottom: 2px solid #000; color: #888; display: flex; align-items: center; justify-content: center; gap: 3px; }
.buttons .ok { width: 77px; height: 28px; color: #000; border: 2px solid #666; border-right-width: 3px; border-bottom-width: 3px; }
.ok svg { width: 15px; height: 13px; }

.rdp { position: absolute; left: 284px; top: 0; width: 458px; height: 27px; }
.rdp-shape { position: absolute; width: 458px; height: 27px; }
.rdp-row { position: relative; height: 24px; display: flex; align-items: center; padding: 0 36px 0 30px; color: #fff; font-size: 12px; }
.pin { width: 21px; height: 20px; border: 1px solid #1763b4; background: #0b4d9c66; display: flex; align-items: center; justify-content: center; }
.pin svg { width: 12px; height: 10px; }
.sig { width: 12px; height: 12px; margin-left: 6px; }
.rdp-row span { margin-left: 131px; letter-spacing: -0.65px; }
.rdp-ctl { width: 54px; height: 12px; margin-left: auto; }

.rtask { position: absolute; left: 0; right: 0; top: 529px; height: 40px; display: flex; padding-left: 1px; color: #fff; background: linear-gradient(90deg, #000 24px, #232523 24px 776px, #000 776px); font-family: "Open Sans", sans-serif; }
.rcell { width: 48px; margin-right: 1px; display: flex; align-items: center; justify-content: center; position: relative; flex: none; }
.rcell:nth-child(-n+2) { margin-right: 0; }
.rcell.tv { margin-right: 3px; }
.rcell.on { background: #505250; border-bottom: 2px solid #76b9ed; }
.rcell.open { background: linear-gradient(#76b9ed, #76b9ed) 4px 38px / 40px 2px no-repeat; }
.rtray { margin-left: auto; padding-right: 19px; display: flex; align-items: center; }
.rtray svg { width: 64px; height: 18px; }
.rtray .note { width: 18px; height: 18px; margin-left: 17px; }
.clock { display: flex; flex-direction: column; align-items: center; font-size: 12px; line-height: 18px; letter-spacing: -0.45px; color: #fff; white-space: nowrap; }
.rtray .clock { margin-left: 9px; width: 53px; }

/* downloads bar */
.downloads { height: 48px; flex: none; background: #3b3b3b; border-top: 1px solid #616161; display: flex; align-items: center; padding: 0 11px 0 4px; color: #fff; }
.downloads .edge-gap { fill: #3b3b3b; }
.dl { width: 232px; height: 32px; display: flex; border-right: 1px solid #5c5c5c; padding: 0 16px 0 18px; flex: none; align-items: center; }
.dl svg { width: 12px; height: 16px; margin-right: 14px; }
.dl svg.wide { width: 16px; margin: 0 12px 0 -2px; }
.dl div { display: flex; flex-direction: column; font-size: 12px; line-height: 18px; letter-spacing: -0.28px; white-space: nowrap; padding-bottom: 3px; }
.dl a { color: #5ca6e5; text-decoration: underline; text-underline-offset: 2px; margin-left: 2px; }
.dl b { width: 14px; height: 2px; margin-left: auto; background: repeating-linear-gradient(90deg, #ccc 0 2px, transparent 2px 6px); }
.show-all { width: 78px; height: 32px; padding: 0 0 2px; border: 0; border-radius: 2px; background: #4d4d4d; color: #fff; font: 600 12px "Open Sans", sans-serif; letter-spacing: -0.1px; margin-left: auto; }
.close { width: 10px; height: 10px; margin-left: 15px; }

/* host taskbar */
.taskbar { height: 40px; flex: none; display: flex; position: relative; color: #fff; background: linear-gradient(90deg, #142503, #1a2a06 35%, #182306); }
.ghost { position: absolute; left: 377px; top: 0; width: 220px; height: 40px; color: #47522e; font-size: 11.500px; letter-spacing: -0.1px; overflow: hidden; }
.ghost span { position: absolute; white-space: nowrap; line-height: 14px; }
.ghost i { position: absolute; left: 34px; top: 0; width: 13px; height: 5px; background: #5a5a14; }
.g1 { left: 53px; top: -10px; } .g2 { left: 53px; top: 14px; }
.g3, .g4, .g5, .g6, .g7 { top: 28px; }
.g3 { left: 14px; } .g4 { left: 61px; } .g5 { left: 73px; } .g6 { left: 159px; } .g7 { left: 202px; }
.cell { width: 48px; margin-right: 1px; display: flex; align-items: center; justify-content: center; position: relative; flex: none; }
.cell:nth-child(-n+4) { margin-right: 0; }
.cell.gap { margin: 0 1px 0 3px; }
.cell.focus { background: #2f5304; border-bottom: 2px solid #b7df88; }
.cell.run { background: linear-gradient(#b7df88, #b7df88) 4px 38px / 40px 2px no-repeat; }
.cell.multi { background: linear-gradient(90deg, #b7df88 31px, #7da355 31px) 4px 38px / 40px 2px no-repeat; }
.clock.out { margin-left: auto; margin-right: 2px; padding-top: 2px; }
```
